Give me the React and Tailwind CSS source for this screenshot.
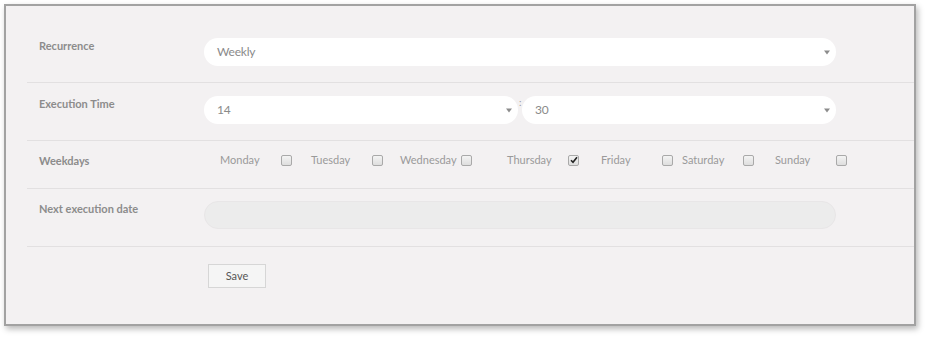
import React from "react";

const font = { fontFamily: "Lato, 'Open Sans', sans-serif" };

function Arrow() {
  return (
    <svg width="6" height="5" viewBox="0 0 6 5" className="shrink-0">
      <polygon points="0,0.5 6,0.5 3,4.5" fill="#8c8c8c" />
    </svg>
  );
}

function Select({ value, w }) {
  return (
    <div
      className={`flex h-[28px] items-center justify-between rounded-[14px] bg-white pl-[13px] pr-[6px] text-[12px] tracking-[-0.2px] text-[#8a8a8a] ${w}`}
    >
      <span>{value}</span>
      <Arrow />
    </div>
  );
}

function Checkbox({ checked }) {
  return (
    <div className="flex h-[11px] w-[11px] shrink-0 items-center justify-center rounded-[2px] border border-[#a9a9a9] bg-gradient-to-b from-[#f4f4f4] to-[#dedede]">
      {checked && (
        <svg width="8" height="8" viewBox="0 0 8 8">
          <path d="M1 4.2 L3 6.3 L7 1.2" stroke="#222" strokeWidth="1.6" fill="none" />
        </svg>
      )}
    </div>
  );
}

const days = [
  { name: "Monday", w: "w-[91px]" },
  { name: "Tuesday", w: "w-[89px]" },
  { name: "Wednesday", w: "w-[107px]" },
  { name: "Thursday", w: "w-[94px]", checked: true },
  { name: "Friday", w: "w-[81px]" },
  { name: "Saturday", w: "w-[93px]" },
  { name: "Sunday", w: "w-[80px]" },
];

function Label({ children }) {
  return (
    <div className="w-[177px] shrink-0 pl-[12px] pt-[1px] text-[11px] font-bold leading-[14px] text-[#8c8c8c]">
      {children}
    </div>
  );
}

export default function App() {
  return (
    <div className="min-h-screen bg-white pl-[4px] pt-[4px]" style={font}>
      <div className="h-[322px] w-[912px] border-2 border-[#a2a2a2] bg-[#f3f1f2] pl-[21px] shadow-[2px_3px_6px_rgba(0,0,0,0.28)]">
        <div className="flex border-b border-[#e2e0e1] pb-[16px] pt-[32px]">
          <Label>Recurrence</Label>
          <Select value="Weekly" w="w-[632px]" />
        </div>
        <div className="flex border-b border-[#e2e0e1] pb-[16px] pt-[13px]">
          <Label>Execution Time</Label>
          <div className="flex items-start">
            <Select value="14" w="w-[314px]" />
            <span className="w-[4px] pl-[1px] text-[10px] leading-[12px] text-[#999]">:</span>
            <Select value="30" w="w-[314px]" />
          </div>
        </div>
        <div className="flex h-[48px] border-b border-[#e2e0e1] pt-[12px]">
          <Label>Weekdays</Label>
          <div className="flex h-[14px] items-center pl-[16px] text-[11px] text-[#9a9a9a]">
            {days.map((d) => (
              <div key={d.name} className={`flex items-center ${d.w}`}>
                <span className="w-[61px] shrink-0 whitespace-nowrap">{d.name}</span>
                <Checkbox checked={d.checked} />
              </div>
            ))}
          </div>
        </div>
        <div className="flex border-b border-[#e2e0e1] pb-[17px] pt-[12px]">
          <Label>Next execution date</Label>
          <div className="h-[28px] w-[632px] rounded-[14px] border border-[#e8e6e7] bg-[#ececec]" />
        </div>
        <div className="flex pt-[17px]">
          <div className="w-[181px] shrink-0" />
          <button className="h-[24px] w-[58px] border border-[#d6d6d6] bg-[#f5f5f5] text-[11px] text-[#555]">
            Save
          </button>
        </div>
      </div>
    </div>
  );
}
